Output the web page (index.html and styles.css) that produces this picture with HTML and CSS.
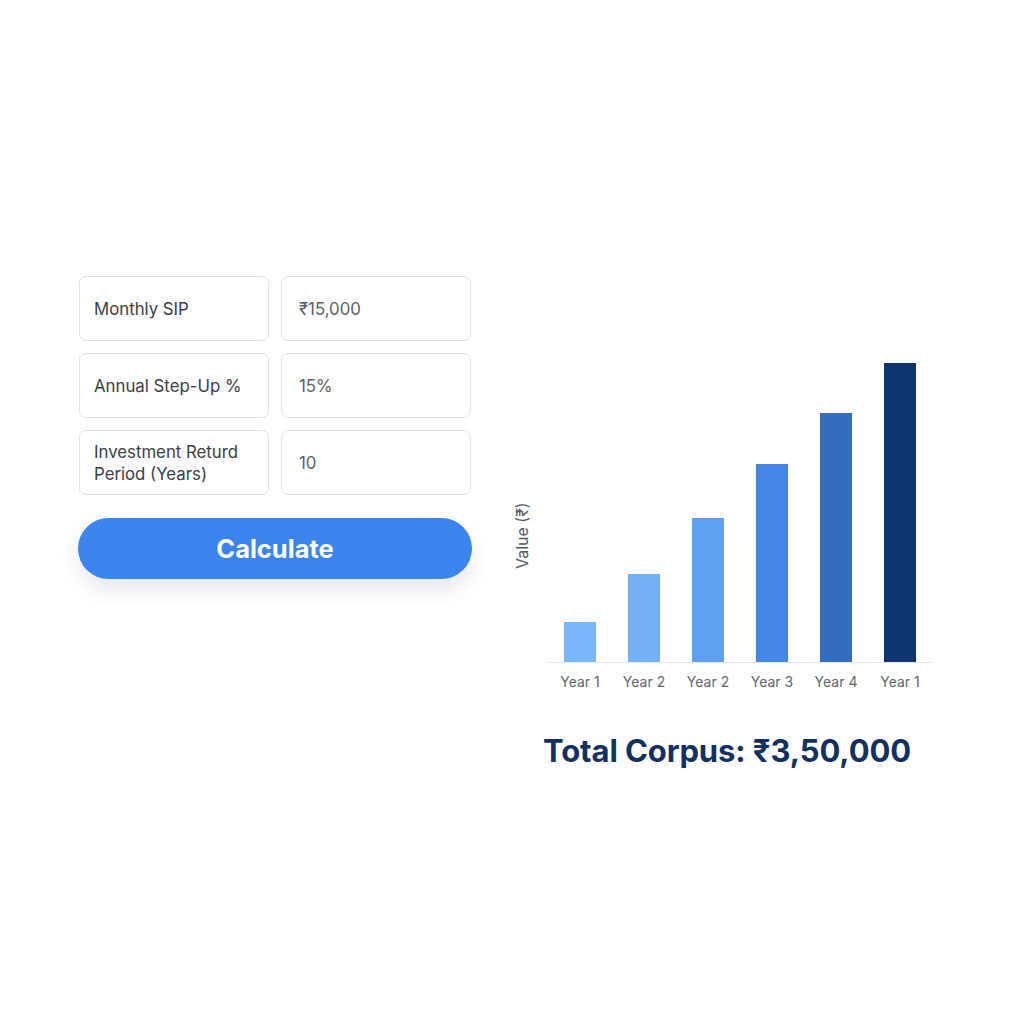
FILE: index.html
```html
<!DOCTYPE html>
<html lang="en">
<head>
<meta charset="utf-8">
<title>SIP Step-Up Calculator</title>
<link rel="stylesheet" href="styles.css">
</head>
<body>
<main class="page">
  <section class="form">
    <div class="fields">
      <div class="field label">Monthly SIP</div>
      <div class="field value">₹15,000</div>
      <div class="field label">Annual Step-Up %</div>
      <div class="field value">15%</div>
      <div class="field label">Investment Returd Period (Years)</div>
      <div class="field value">10</div>
    </div>
    <button class="calc">Calculate</button>
  </section>
  <section class="results">
    <div class="chart">
      <div class="ylabel"><span>Value (₹)</span></div>
      <div class="plotwrap">
        <div class="plot">
          <div class="col"><div class="bar" style="height:40px;background:#77b6f8"></div></div>
          <div class="col"><div class="bar" style="height:88px;background:#72b1f7"></div></div>
          <div class="col"><div class="bar" style="height:144px;background:#5d9ff1"></div></div>
          <div class="col"><div class="bar" style="height:198px;background:#4587e4"></div></div>
          <div class="col"><div class="bar" style="height:249px;background:#336dc0"></div></div>
          <div class="col"><div class="bar" style="height:299px;background:#0e3670"></div></div>
        </div>
        <div class="xlabels">
          <span>Year 1</span><span>Year 2</span><span>Year 2</span><span>Year 3</span><span>Year 4</span><span>Year 1</span>
        </div>
      </div>
    </div>
    <h2 class="total">Total Corpus: ₹3,50,000</h2>
  </section>
</main>
</body>
</html>
```
FILE: styles.css
```css
* { box-sizing: border-box; }
html, body { margin: 0; padding: 0; background: #ffffff; }
body { font-family: Inter, "Noto Sans", "Liberation Sans", sans-serif; width: 1024px; height: 1024px; overflow: hidden; }
.page { display: flex; align-items: flex-start; padding: 276px 0 0 78px; }
.form { width: 394px; display: flex; flex-direction: column; }
.fields { display: grid; grid-template-columns: 190px 190px; column-gap: 12px; row-gap: 12px; padding-left: 1px; }
.field { height: 65px; border: 1.5px solid #dfe2e8; border-radius: 7px; display: flex; align-items: center; font-size: 16.8px; line-height: 22px; background: #fff; }
.field.label { padding: 0 14px; color: #3b4047; }
.field.value { padding: 0 17px; color: #5a5f66; }
.calc { margin-top: 23px; height: 61px; width: 394px; border: none; border-radius: 31px; background: #3b84ec; color: #fff; font-family: Inter, "Noto Sans", "Liberation Sans", sans-serif; font-size: 25.5px; font-weight: 700; box-shadow: 0 10px 22px rgba(40, 60, 100, 0.12); }
.results { margin-left: 34px; margin-top: 86px; display: flex; flex-direction: column; }
.chart { display: flex; }
.ylabel { width: 42px; display: flex; justify-content: flex-start; padding-left: 6px; padding-top: 134px; }
.ylabel span { writing-mode: vertical-rl; transform: rotate(180deg); font-size: 16px; color: #555a61; height: 80px; text-align: center; }
.plotwrap { width: 384px; }
.plot { height: 301px; display: flex; align-items: flex-end; border-bottom: 1.5px solid #e6e8ec; }
.col { flex: 1; display: flex; justify-content: center; height: 100%; align-items: flex-end; }
.bar { width: 32px; }
.xlabels { display: flex; margin-top: 10px; }
.xlabels span { flex: 1; text-align: center; font-size: 14px; color: #62666d; }
.total { margin: 42px 0 0 37px; font-size: 31px; font-weight: 700; color: #13305f; letter-spacing: -0.1px; }
```
